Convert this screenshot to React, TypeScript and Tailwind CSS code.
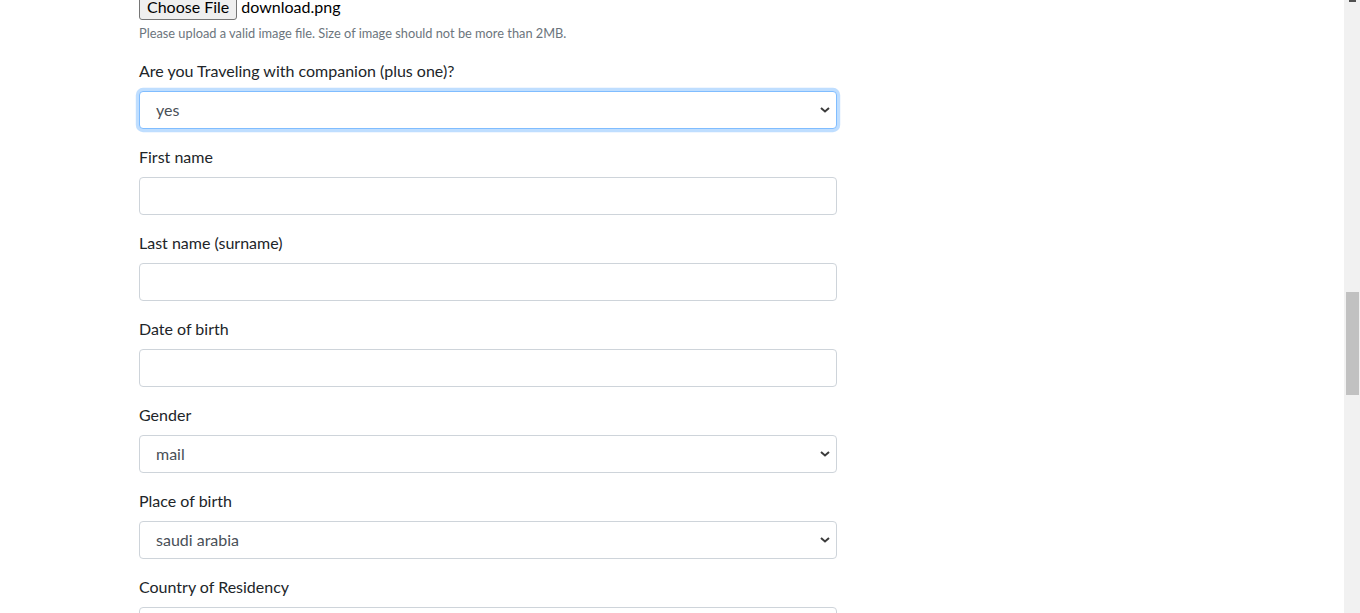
import React from "react";

const font = { fontFamily: 'Lato, "Noto Sans", Arial, sans-serif' };

function Chevron() {
  return (
    <svg width="10" height="6" viewBox="0 0 10 6" className="absolute right-[6px] top-1/2 -translate-y-1/2">
      <path d="M1 1l4 3.5L9 1" fill="none" stroke="#3c3c3c" strokeWidth="2" />
    </svg>
  );
}

function Field({ label, children }: { label: string; children: React.ReactNode }) {
  return (
    <div className="mb-4">
      <label className="mb-2 block text-[16px] leading-6 text-[#212529]">{label}</label>
      {children}
    </div>
  );
}

function TextInput() {
  return <div className="h-[38px] w-full rounded-[4px] border border-[#ced4da] bg-white" />;
}

function Select({ value, focused }: { value: string; focused?: boolean }) {
  const ring = focused
    ? "border-[#80bdff] shadow-[0_0_0_3.2px_rgba(0,123,255,0.25)]"
    : "border-[#ced4da]";
  return (
    <div className={`relative flex h-[38px] w-full items-center rounded-[4px] border bg-white pl-4 text-[16px] text-[#495057] ${ring}`}>
      {value}
      <Chevron />
    </div>
  );
}

export default function App() {
  return (
    <div className="flex h-[613px] overflow-hidden bg-white" style={font}>
      <div className="flex-1 pl-[139px]">
        <div className="-mt-[6px] w-[698px]">
          {/* upload */}
          <div className="flex items-center gap-1 text-[16px] text-black">
            <div className="flex h-[26px] items-center rounded-[3px] border border-[#767676] bg-[#efefef] px-[7px]">
              Choose File
            </div>
            <span>download.png</span>
          </div>
          <p className="mt-[4px] mb-4 text-[12.8px] leading-[19.2px] text-[#6c757d]">
            Please upload a valid image file. Size of image should not be more than 2MB.
          </p>

          <Field label="Are you Traveling with companion (plus one)?">
            <Select value="yes" focused />
          </Field>
          <Field label="First name">
            <TextInput />
          </Field>
          <Field label="Last name (surname)">
            <TextInput />
          </Field>
          <Field label="Date of birth">
            <TextInput />
          </Field>
          <Field label="Gender">
            <Select value="mail" />
          </Field>
          <Field label="Place of birth">
            <Select value="saudi arabia" />
          </Field>
          <Field label="Country of Residency">
            <TextInput />
          </Field>
        </div>
      </div>

      {/* scrollbar */}
      <div className="flex w-4 flex-col items-center bg-[#f1f1f1]">
        <div className="h-[2px] w-[7px] bg-[#505050]" />
        <div className="h-[290px]" />
        <div className="ml-px h-[103px] w-[13px] bg-[#c1c1c1]" />
      </div>
    </div>
  );
}
